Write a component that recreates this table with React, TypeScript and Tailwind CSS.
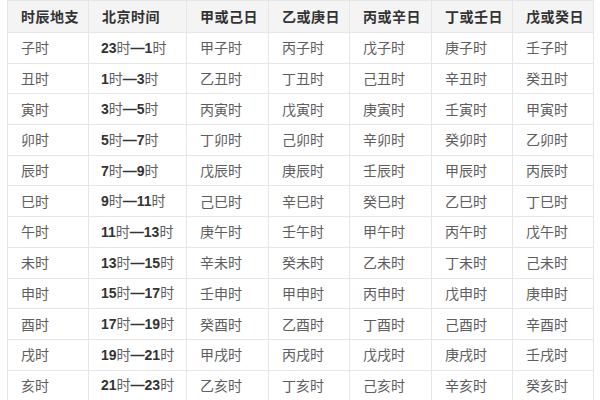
const headers = ['时辰地支', '北京时间', '甲或己日', '乙或庚日', '丙或辛日', '丁或壬日', '戊或癸日'];

const rows: Array<[string, [string, string], string, string, string, string, string]> = [
  ['子时', ['23', '1'], '甲子时', '丙子时', '戊子时', '庚子时', '壬子时'],
  ['丑时', ['1', '3'], '乙丑时', '丁丑时', '己丑时', '辛丑时', '癸丑时'],
  ['寅时', ['3', '5'], '丙寅时', '戊寅时', '庚寅时', '壬寅时', '甲寅时'],
  ['卯时', ['5', '7'], '丁卯时', '己卯时', '辛卯时', '癸卯时', '乙卯时'],
  ['辰时', ['7', '9'], '戊辰时', '庚辰时', '壬辰时', '甲辰时', '丙辰时'],
  ['巳时', ['9', '11'], '己巳时', '辛巳时', '癸巳时', '乙巳时', '丁巳时'],
  ['午时', ['11', '13'], '庚午时', '壬午时', '甲午时', '丙午时', '戊午时'],
  ['未时', ['13', '15'], '辛未时', '癸未时', '乙未时', '丁未时', '己未时'],
  ['申时', ['15', '17'], '壬申时', '甲申时', '丙申时', '戊申时', '庚申时'],
  ['酉时', ['17', '19'], '癸酉时', '乙酉时', '丁酉时', '己酉时', '辛酉时'],
  ['戌时', ['19', '21'], '甲戌时', '丙戌时', '戊戌时', '庚戌时', '壬戌时'],
  ['亥时', ['21', '23'], '乙亥时', '丁亥时', '己亥时', '辛亥时', '癸亥时'],
];

const widths = ['w-[81px]', 'w-[98px]', 'w-[82px]', 'w-[81px]', 'w-[82px]', 'w-[81px]', 'w-[81px]'];

export default function App() {
  return (
    <div className="w-[600px] h-[400px] overflow-hidden bg-white pl-[7px] font-['Noto_Sans_CJK_SC',sans-serif]">
      <table className="w-[587px] table-fixed border-collapse">
        <colgroup>
          {widths.map((w, i) => (
            <col key={i} className={w} />
          ))}
        </colgroup>
        <thead>
          <tr className="h-[32px] bg-[#f4f4f4]">
            {headers.map(h => (
              <th
                key={h}
                className="border border-[#e6e6e6] pl-[13px] text-left text-[14px] font-bold text-[#333] tracking-[0.5px]"
              >
                {h}
              </th>
            ))}
          </tr>
        </thead>
        <tbody>
          {rows.map(r => (
            <tr key={r[0]} className="h-[30.7px]">
              <td className="border border-[#e6e6e6] pl-[13px] text-[14px] text-[#5e5e5e]">{r[0]}</td>
              <td className="border border-[#e6e6e6] pl-[12px] text-[14px] text-[#5e5e5e]">
                <span className="font-['Liberation_Sans',sans-serif] font-semibold text-[#333]">{r[1][0]}</span>
                时
                <span className="font-['Liberation_Sans',sans-serif] font-semibold text-[#333]">—{r[1][1]}</span>
                时
              </td>
              {r.slice(2).map((c, i) => (
                <td key={i} className="border border-[#e6e6e6] pl-[13px] text-[14px] text-[#5e5e5e]">
                  {c as string}
                </td>
              ))}
            </tr>
          ))}
        </tbody>
      </table>
    </div>
  );
}
